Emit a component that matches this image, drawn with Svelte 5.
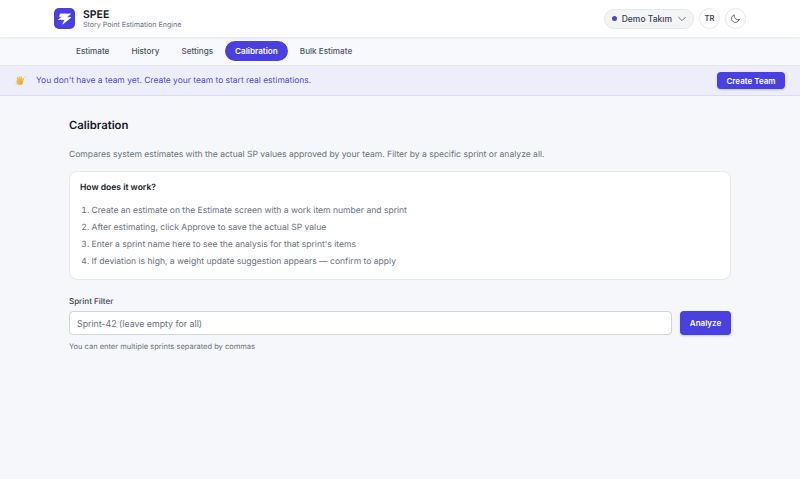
<script lang="ts">
  const tabs = ["Estimate", "History", "Settings", "Calibration", "Bulk Estimate"];
  let active = $state("Calibration");
  let sprint = $state("");
  const steps = [
    "Create an estimate on the Estimate screen with a work item number and sprint",
    "After estimating, click Approve to save the actual SP value",
    "Enter a sprint name here to see the analysis for that sprint's items",
    "If deviation is high, a weight update suggestion appears — confirm to apply",
  ];
</script>

<header class="top">
  <div class="brand">
    <div class="logo">
      <svg viewBox="0 0 24 24" width="17" height="17"><path d="M6 5.500h14.500L15 10.500h6L9.500 20l3-6.500H3.500l5.500-4H5z" fill="#fff" stroke="#fff" stroke-width="1" stroke-linejoin="round" /></svg>
    </div>
    <div>
      <div class="name">SPEE</div>
      <div class="sub">Story Point Estimation Engine</div>
    </div>
  </div>
  <div class="tools">
    <button class="team">
      <span class="dot"></span>
      <span>Demo Takım</span>
      <svg viewBox="0 0 12 12" width="10" height="10"><path d="M2 4l4 4 4-4" fill="none" stroke="#6b7280" stroke-width="1.2" stroke-linecap="round" stroke-linejoin="round" /></svg>
    </button>
    <button class="circle">TR</button>
    <button class="circle" aria-label="Theme">
      <svg viewBox="0 0 24 24" width="11" height="11"><path d="M20 14.500A8.500 8.500 0 0 1 9.500 4a8.500 8.500 0 1 0 10.500 10.500z" fill="none" stroke="#4b5563" stroke-width="1.800" stroke-linecap="round" stroke-linejoin="round" /></svg>
    </button>
  </div>
</header>

<nav class="tabs">
  {#each tabs as t}
    <button class:on={active === t} onclick={() => (active = t)}>{t}</button>
  {/each}
</nav>

<div class="banner">
  <div class="msg">
    <svg class="hand" viewBox="0 0 14 14" width="12" height="12">
      <path d="M3 6.500 1.800 3.600c-.4-.9.7-1.400 1.200-.6L4.600 5.400 4 2.400c-.2-1 1.100-1.200 1.400-.3l1 2.700.1-2.700c0-1 1.300-1 1.400 0l.4 3.200 1-1.500c.6-.8 1.600-.2 1.200.7l-.8 2.300c-.3 2.400-1 4.900-3.700 5.200-2.500.2-3.900-2.200-4.600-5.500z" fill="#f3b63f" />
      <path d="M5 7.500c.8 1.500 2.200 2 3.500 1.500" stroke="#d98f26" stroke-width=".8" fill="none" />
      <path d="M11.500 1.500l1 1.500M1 9.500l1 1.500" stroke="#a9a2e8" stroke-width=".8" fill="none" />
    </svg>
    <span>You don't have a team yet. Create your team to start real estimations.</span>
  </div>
  <button class="primary small">Create Team</button>
</div>

<main>
  <h1>Calibration</h1>
  <p class="lead">Compares system estimates with the actual SP values approved by your team. Filter by a specific sprint or analyze all.</p>

  <section class="card">
    <h2>How does it work?</h2>
    <ol>
      {#each steps as s}
        <li>{s}</li>
      {/each}
    </ol>
  </section>

  <label class="lbl" for="sprint">Sprint Filter</label>
  <div class="filter">
    <input id="sprint" type="text" placeholder="Sprint-42 (leave empty for all)" bind:value={sprint} />
    <button class="primary">Analyze</button>
  </div>
  <p class="hint">You can enter multiple sprints separated by commas</p>
</main>

<style>
  :global(body) {
    background: #f5f7fa;
    font-family: Inter, "Liberation Sans", sans-serif;
    color: #111827;
    text-rendering: geometricPrecision;
  }
  button {
    font: inherit;
    cursor: pointer;
  }
  .top {
    height: 37px;
    display: flex;
    align-items: center;
    justify-content: space-between;
    padding: 0 54px;
    background: #fff;
    box-shadow: 0 1px 3px rgba(0, 0, 0, 0.08);
    position: relative;
  }
  .brand {
    display: flex;
    align-items: center;
    gap: 8px;
  }
  .logo {
    width: 21px;
    height: 21px;
    border-radius: 5px;
    background: #4a40e0;
    display: flex;
    align-items: center;
    justify-content: center;
  }
  .name {
    font-size: 10.500px;
    font-weight: 600;
    line-height: 13px;
    margin-bottom: -1px;
  }
  .sub {
    font-size: 7.100px;
    line-height: 10px;
    color: #6b7280;
  }
  .tools {
    display: flex;
    align-items: center;
    gap: 5px;
  }
  .team {
    height: 20px;
    display: flex;
    align-items: center;
    gap: 5px;
    padding: 0 6px 0 7px;
    border: 1px solid #e5e7eb;
    border-radius: 10px;
    background: #f3f4f6;
    font-size: 8.500px;
    font-weight: 500;
    color: #374151;
  }
  .dot {
    width: 5px;
    height: 5px;
    border-radius: 50%;
    background: #4a40e0;
  }
  .circle {
    width: 21px;
    height: 21px;
    padding: 0;
    border: 1px solid #e5e7eb;
    border-radius: 50%;
    background: #fff;
    font-size: 7.500px;
    font-weight: 600;
    color: #374151;
    display: flex;
    align-items: center;
    justify-content: center;
  }
  .tabs {
    height: 29px;
    display: flex;
    align-items: center;
    gap: 2px;
    padding: 0 66px;
    background: #f8f9fc;
    border-bottom: 1px solid #e5e7eb;
    box-sizing: border-box;
  }
  .tabs button {
    height: 20px;
    padding: 0 10px;
    border: none;
    border-radius: 10px;
    background: transparent;
    font-size: 8.150px;
    font-weight: 500;
    color: #4b5563;
  }
  .tabs button.on {
    background: #4a40e0;
    color: #fff;
    font-weight: 600;
  }
  .banner {
    height: 30px;
    box-sizing: border-box;
    display: flex;
    align-items: center;
    justify-content: space-between;
    padding: 0 15px;
    background: #eeeefb;
    border-bottom: 1px solid #dcdaf8;
  }
  .msg {
    display: flex;
    align-items: center;
    gap: 9px;
    font-size: 8.450px;
    color: #4f46e5;
  }
  .primary {
    border: none;
    border-radius: 4px;
    background: #4a40e0;
    color: #fff;
    font-weight: 600;
    font-size: 8px;
    box-shadow: 0 1px 2px rgba(79, 70, 229, 0.3);
  }
  .primary.small {
    width: 68px;
    height: 17px;
    padding: 0;
  }
  main {
    width: 662px;
    margin: 0 auto;
    padding-top: 21px;
  }
  h1 {
    margin: 0;
    font-size: 11.300px;
    line-height: 16px;
    font-weight: 600;
  }
  .lead {
    margin: 16px 0 0;
    font-size: 8.550px;
    line-height: 13px;
    color: #6b7280;
  }
  .card {
    margin-top: 9px;
    height: 109px;
    box-sizing: border-box;
    padding: 11px 10px;
    background: #fff;
    border: 1px solid #e5e7eb;
    border-radius: 8px;
  }
  h2 {
    margin: 0;
    font-size: 8.550px;
    line-height: 11px;
    font-weight: 600;
  }
  ol {
    margin: 9px 0 0;
    padding: 0 0 0 11.500px;
    font-size: 8.550px;
    line-height: 17px;
    color: #6b7280;
  }
  .lbl {
    display: block;
    margin-top: 16px;
    font-size: 8px;
    line-height: 10px;
    font-weight: 500;
    color: #374151;
  }
  .filter {
    display: flex;
    gap: 8px;
    margin-top: 5px;
  }
  input {
    flex: 1;
    height: 24px;
    box-sizing: border-box;
    padding: 0 7px;
    border: 1px solid #d1d5db;
    border-radius: 4px;
    background: #fff;
    font: inherit;
    font-size: 8.800px;
    color: #111827;
  }
  input::placeholder {
    color: #6b7280;
  }
  .filter .primary {
    width: 51px;
    height: 24px;
    padding: 0;
    font-size: 8px;
  }
  .hint {
    margin: 7px 0 0;
    font-size: 7.500px;
    line-height: 10px;
    color: #6b7280;
  }
</style>
